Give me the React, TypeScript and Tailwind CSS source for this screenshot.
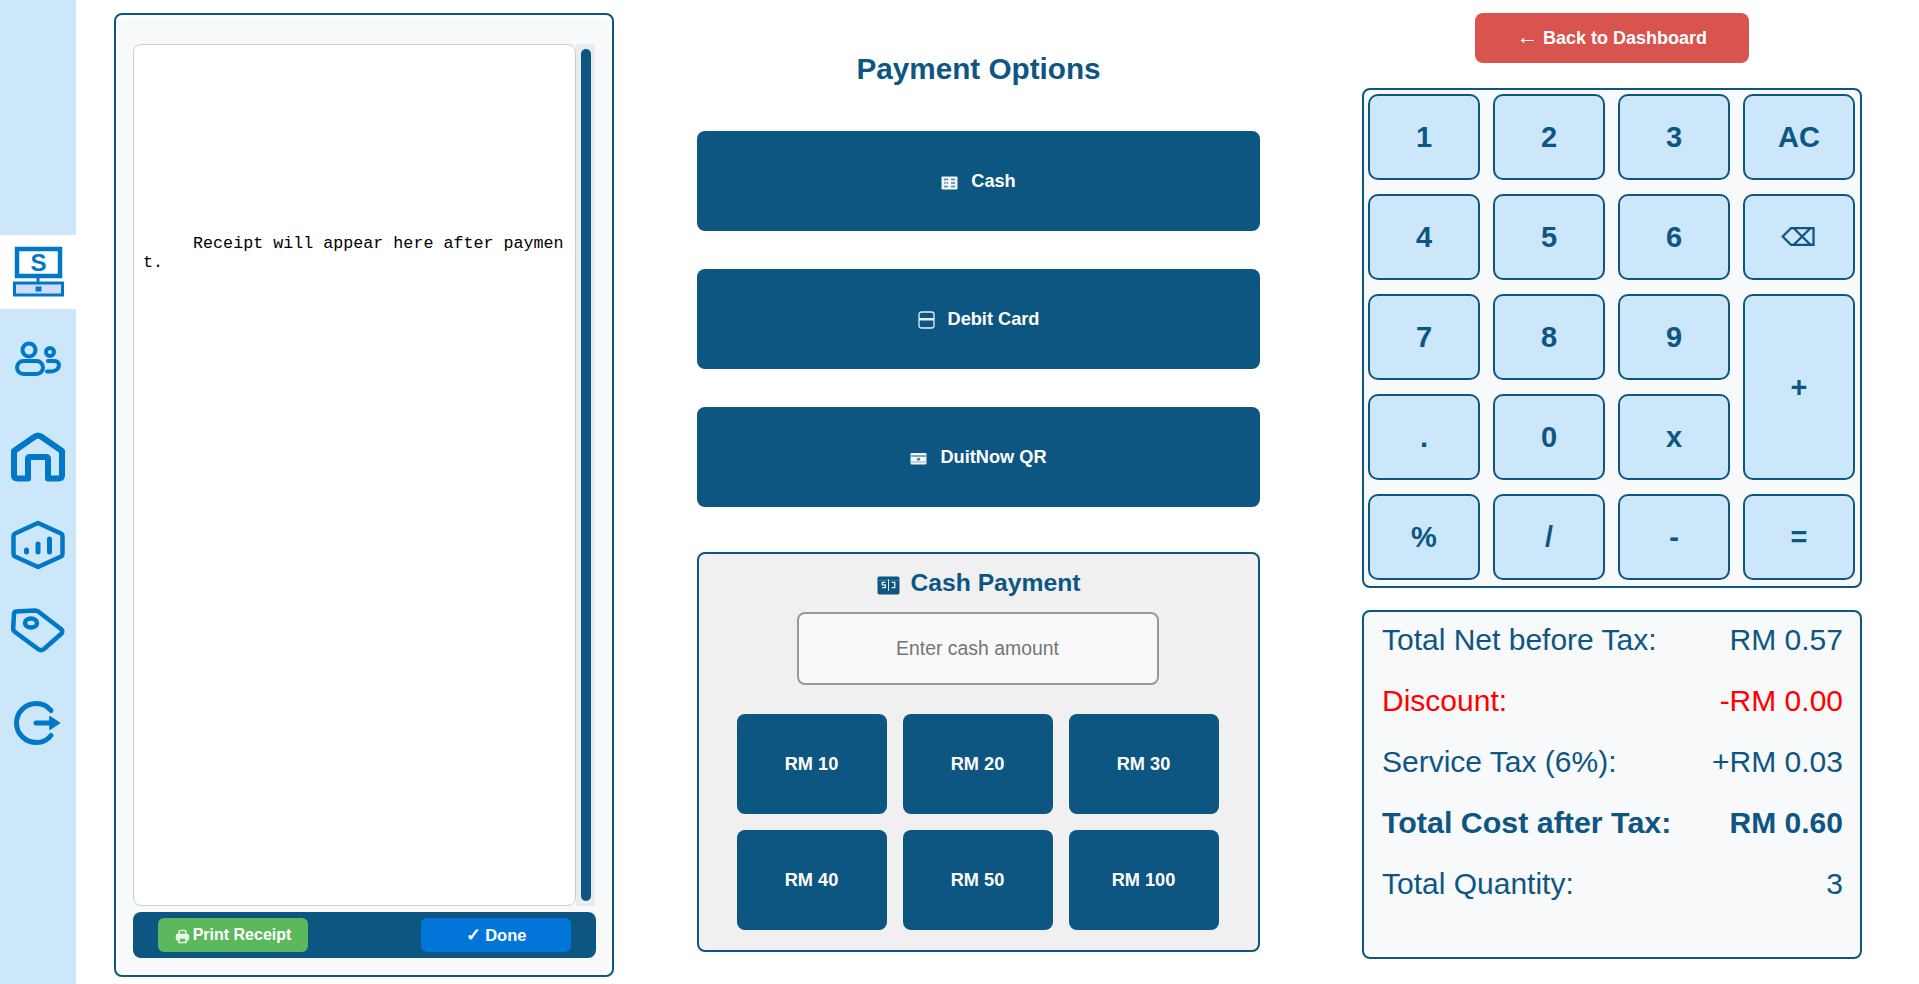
import React from 'react'

const BLUE = '#0078c8'

const PosIcon = () => (
  <svg width="54" height="52" viewBox="0 0 54 52" fill="none">
    <rect x="6" y="3" width="43" height="27" stroke={BLUE} strokeWidth="4.500" fill="#fff" />
    <path d="M27 30v7" stroke={BLUE} strokeWidth="3" />
    <rect x="3.500" y="37" width="48" height="12" stroke={BLUE} strokeWidth="3" fill="#cfdcfb" />
    <rect x="24.500" y="40.500" width="6" height="5" fill={BLUE} />
    <text x="27.500" y="25" textAnchor="middle" fontFamily="Liberation Sans" fontWeight="bold" fontSize="24" fill={BLUE}>S</text>
  </svg>
)

const UsersIcon = () => (
  <svg width="46" height="36" viewBox="0 0 46 36" fill="none" stroke={BLUE} strokeWidth="4" strokeLinecap="round">
    <circle cx="14" cy="9" r="6.500" />
    <circle cx="35" cy="11" r="4" />
    <rect x="2" y="20" width="26" height="13" rx="6.500" />
    <path d="M33 20h6c3 0 5 1.500 5 4 0 4-4 6.500-8 6.500h-4" />
  </svg>
)

const HomeIcon = () => (
  <svg width="54" height="50" viewBox="0 0 54 50" fill="none" stroke={BLUE} strokeWidth="6" strokeLinejoin="round">
    <path d="M3 19 24 4.500c2-1.300 4-1.300 6 0L51 19v24c0 2-1 3.500-3.500 3.500H37V27c0-1.500-1-2-2-2H19c-1 0-2 .5-2 2v19.500H6.500C4 46.500 3 45 3 43Z" />
  </svg>
)

const ChartIcon = () => (
  <svg width="54" height="50" viewBox="0 0 54 50" fill="none" stroke={BLUE} strokeLinecap="round" strokeLinejoin="round">
    <path d="M27 3 50 13.500c1 .5 1.500 1 1.500 2.500v18c0 1.500-.5 2-1.500 2.500L27 47 4 36.500c-1-.5-1.500-1-1.500-2.500V16c0-1.500.5-2 1.500-2.500Z" strokeWidth="4.500" />
    <path d="M15.500 30v2M27 24v8M38.500 19v13" strokeWidth="5" />
  </svg>
)

const TagIcon = () => (
  <svg width="54" height="46" viewBox="0 0 54 46" fill="none" stroke={BLUE} strokeLinejoin="round">
    <path d="M5 3.500 24 2.500c1.500 0 2.500.5 3.500 1.200L50 21c1.800 1.500 1.800 3.500 0 5L33 41c-2 1.500-4 1.500-6 0L4 24c-1.500-1-2-2.500-1.800-4L3 6c.2-1.500 1-2.500 2-2.500Z" strokeWidth="4.500" />
    <ellipse cx="20" cy="15" rx="6" ry="4.500" strokeWidth="4.500" />
  </svg>
)

const LogoutIcon = () => (
  <svg width="48" height="44" viewBox="0 0 48 44" fill="none" stroke={BLUE} strokeWidth="5" strokeLinecap="round">
    <path d="M37 9.500C33.500 5 28 2.500 22.500 2.500 11.500 2.500 2.500 11 2.500 22s9 19.500 20 19.500c5.500 0 11-2.500 14.500-7" />
    <path d="M22 22h17" />
    <path d="M36 15.500 46 22 36 28.500Z" fill={BLUE} strokeWidth="1" strokeLinejoin="round" />
  </svg>
)

const CashGlyph = () => (
  <svg width="17" height="14" viewBox="0 0 17 14" className="translate-y-[1px]">
    <rect x="0.500" y="0.500" width="16" height="13" rx="1" fill="#eef4f8" />
    <path d="M3 3.500h4M3 7h1.500M5.500 7H7M3 10.500h4M10 3.500h4M10 7h4M10 10.500h4" stroke="#56849f" strokeWidth="1.500" />
  </svg>
)

const AtmGlyph = () => (
  <svg width="17" height="18" viewBox="0 0 17 18" fill="none">
    <rect x="1" y="1" width="15" height="16" rx="2.500" stroke="#e6eef3" strokeWidth="1.300" />
    <rect x="1" y="7" width="15" height="2.500" fill="#e6eef3" />
  </svg>
)

const QrGlyph = () => (
  <svg width="17" height="13" viewBox="0 0 17 13" className="translate-y-[1px]">
    <rect x="0.500" y="1" width="16" height="11.500" rx="1" fill="#eef4f8" />
    <path d="M1 4h15" stroke="#0d5682" strokeWidth="1" />
    <path d="M1 10h15" stroke="#8fb0c6" strokeWidth="1" />
    <rect x="7" y="6" width="3" height="2.500" fill="#56849f" />
  </svg>
)

const BigCashGlyph = () => (
  <svg width="23" height="19" viewBox="0 0 22 18" className="translate-y-[2px]">
    <rect x="0.500" y="0.500" width="21" height="17" rx="1.500" fill="#0d5682" />
    <path d="M1 4h20" stroke="#3d7ba0" strokeWidth="1" />
    <path d="M11 3v11" stroke="#f0f0f0" strokeWidth="1" />
    <path d="M8 6H5v2.500h3V11H5M14 6h3v5h-3" stroke="#f0f0f0" strokeWidth="1.200" fill="none" />
  </svg>
)

const PrinterGlyph = () => (
  <svg width="15" height="15" viewBox="0 0 15 15" fill="none" stroke="#e8f6e6" strokeWidth="1.500" className="translate-y-[1px]">
    <path d="M4 6V3c0-1 1-1.500 1.500-1.500h4c.5 0 1.500.5 1.500 1.500v3" />
    <rect x="1.500" y="5.500" width="12" height="5.500" rx="1.500" fill="#e8f6e6" />
    <rect x="4" y="9" width="7" height="4.500" fill="#5cb85c" />
  </svg>
)

const navItems = [
  { id: 'pos', icon: PosIcon, className: 'mt-[235px] h-[74px] bg-white' },
  { id: 'users', icon: UsersIcon, className: 'mt-[16px] h-[68px]' },
  { id: 'home', icon: HomeIcon, className: 'mt-[30px] h-[68px]' },
  { id: 'chart', icon: ChartIcon, className: 'mt-[20px] h-[68px]' },
  { id: 'tag', icon: TagIcon, className: 'mt-[18px] h-[68px]' },
  { id: 'logout', icon: LogoutIcon, className: 'mt-[24px] h-[68px]' },
]

const paymentOptions = [
  { label: 'Cash', icon: <CashGlyph /> },
  { label: 'Debit Card', icon: <AtmGlyph /> },
  { label: 'DuitNow QR', icon: <QrGlyph /> },
]

const amounts = ['RM 10', 'RM 20', 'RM 30', 'RM 40', 'RM 50', 'RM 100']

const keys = ['1', '2', '3', 'AC', '4', '5', '6', '⌫', '7', '8', '9', '+', '.', '0', 'x', '%', '/', '-', '=']

const summary = [
  { label: 'Total Net before Tax:', value: 'RM 0.57', className: '' },
  { label: 'Discount:', value: '-RM 0.00', className: 'text-[#ff0000]' },
  { label: 'Service Tax (6%):', value: '+RM 0.03', className: '' },
  { label: 'Total Cost after Tax:', value: 'RM 0.60', className: 'font-bold' },
  { label: 'Total Quantity:', value: '3', className: '' },
]

export default function App() {
  return (
    <div className="flex h-[984px] w-[1919px] overflow-hidden bg-white font-['Liberation_Sans',Arial,sans-serif] text-[#0d5682]">
      {/* Sidebar */}
      <aside className="flex w-[76px] shrink-0 flex-col bg-[#cce6fa]">
        {navItems.map((item) => (
          <div key={item.id} className={`flex items-center justify-center ${item.className}`}>
            <item.icon />
          </div>
        ))}
      </aside>

      {/* Receipt */}
      <section className="ml-[38px] mt-[13px] flex h-[964px] w-[500px] shrink-0 flex-col rounded-[8px] border-2 border-[#0d5682] p-[3px]">
        <div className="flex flex-1 flex-col rounded-[8px] bg-[#f8f9fa] pb-[13px] pl-[14px] pr-[13px] pt-[26px]">
          <div className="flex h-[862px]">
            <div className="h-full w-[443px] rounded-[8px] border border-[#cccccc] bg-white px-[9px] pt-[190px]">
              <pre className="w-full whitespace-pre-wrap break-all font-['Liberation_Mono','Courier_New',monospace] text-[16.7px] leading-[18.5px] text-black">
                {'     Receipt will appear here after payment.'}
              </pre>
            </div>
            <div className="flex h-full w-[19px] justify-center bg-[#e9ecef] py-[5px] pl-[1px]">
              <div className="h-full w-[10px] rounded-[5px] bg-[#0d5682]" />
            </div>
          </div>
          <div className="mt-[6px] flex h-[46px] items-center justify-between rounded-[8px] bg-[#0d5682] pl-[25px] pr-[25px]">
            <button className="flex h-[34px] w-[150px] items-center justify-center gap-[3px] rounded-[6px] bg-[#5cb85c] text-[16px] font-bold text-white">
              <PrinterGlyph />
              Print Receipt
            </button>
            <button className="h-[34px] w-[150px] rounded-[6px] bg-[#0275d8] text-[16.5px] font-bold text-white">
              <span className="text-[18px]">✓</span> Done
            </button>
          </div>
        </div>
      </section>

      {/* Payment options */}
      <section className="ml-[83px] flex w-[563px] shrink-0 flex-col">
        <h2 className="mt-[50px] h-[38px] text-center text-[29.7px] leading-[38px] font-bold">Payment Options</h2>
        <div className="mt-[43px] flex flex-col gap-[38px]">
          {paymentOptions.map((option) => (
            <button
              key={option.label}
              className="flex h-[100px] items-center justify-center gap-[13px] rounded-[8px] bg-[#0d5682] pt-[1px] text-[18.2px] font-bold text-white"
            >
              {option.icon}
              {option.label}
            </button>
          ))}
        </div>
        <div className="mt-[45px] flex h-[400px] flex-col items-center rounded-[8px] border-2 border-[#0d5682] bg-[#f0f0f0] pr-[2px]">
          <h3 className="ml-[3px] mt-[13px] flex h-[32px] items-center gap-[10px] text-[24.7px] font-bold">
            <BigCashGlyph />
            Cash Payment
          </h3>
          <input
            placeholder="Enter cash amount"
            className="mt-[13px] h-[73px] w-[362px] rounded-[8px] border-2 border-[#999999] bg-[#f9f9f9] text-center text-[19.4px] outline-none placeholder:text-[#757575]"
          />
          <div className="mt-[29px] grid grid-cols-3 gap-[16px]">
            {amounts.map((amount) => (
              <button key={amount} className="h-[100px] w-[150px] rounded-[8px] bg-[#0d5682] pt-[1px] text-[18.2px] font-bold text-white">
                {amount}
              </button>
            ))}
          </div>
        </div>
      </section>

      {/* Keypad + totals */}
      <section className="ml-[102px] flex w-[500px] shrink-0 flex-col items-center">
        <button className="mt-[13px] h-[50px] w-[274px] rounded-[8px] bg-[#d9534f] text-[18px] font-bold text-white">
          <span className="text-[21px] font-normal leading-none">←</span> Back to Dashboard
        </button>
        <div className="mt-[25px] grid h-[500px] w-[500px] grid-cols-[repeat(4,112px)] grid-rows-[repeat(5,86px)] gap-x-[13px] gap-y-[14px] rounded-[8px] border-2 border-[#0d5682] bg-[#f8f9fa] p-[4px]">
          {keys.map((key) => (
            <button
              key={key}
              className={`rounded-[10px] border-2 border-[#0d5682] bg-[#cce6fa] pt-[1px] font-bold ${key === '+' ? 'row-span-2' : ''} ${key === '⌫' ? "font-['DejaVu_Sans'] text-[25px]" : 'text-[29px]'}`}
            >
              {key}
            </button>
          ))}
        </div>
        <div className="mt-[22px] h-[349px] w-[500px] rounded-[8px] border-2 border-[#0d5682] bg-[#f8f9fa] pl-[18px] pr-[17px] text-[30px]">
          {summary.map((row) => (
            <div key={row.label} className={`flex h-[61px] items-center justify-between pb-[6px] ${row.className}`}>
              <span className={row.className === 'font-bold' ? 'text-[30.4px]' : ''}>{row.label}</span>
              <span>{row.value}</span>
            </div>
          ))}
        </div>
      </section>
    </div>
  )
}
